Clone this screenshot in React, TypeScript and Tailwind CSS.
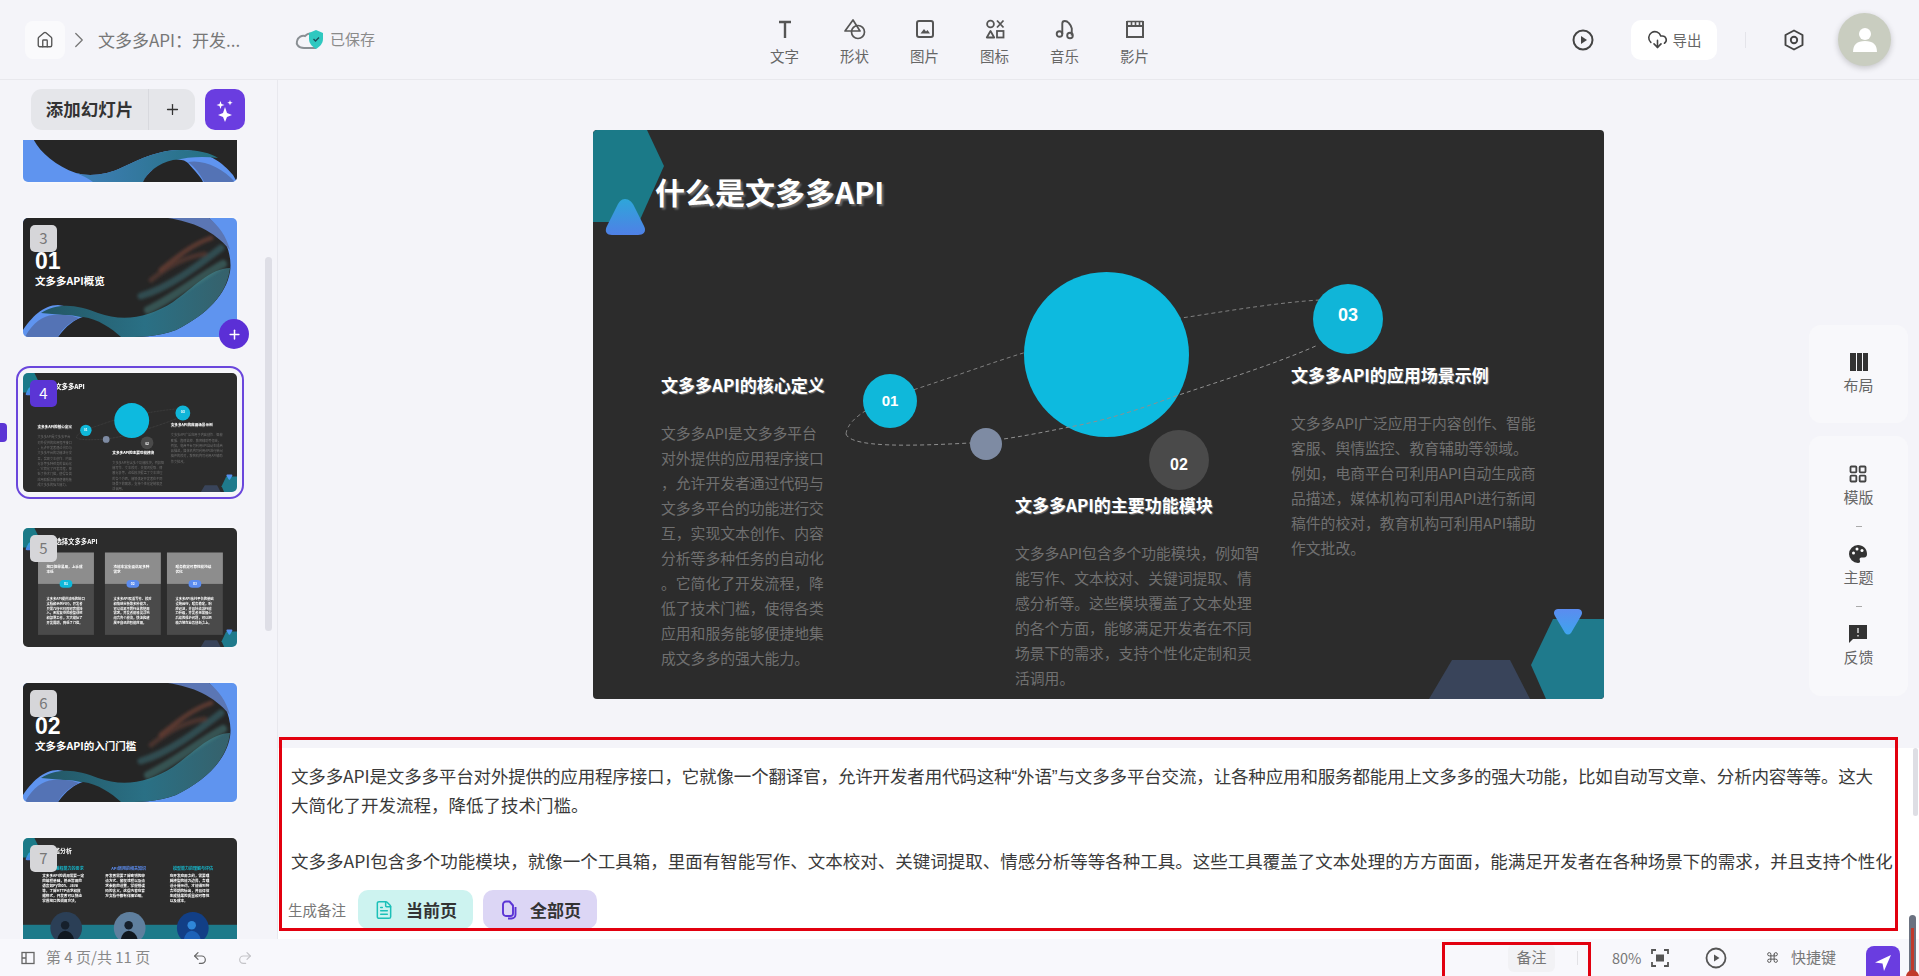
import { Home, ChevronRight, Plus, Undo2, Redo2, Command, CloudDownload, FileText, LayoutGrid } from "lucide-react";

const paraOne = [
  "文多多API是文多多平台",
  "对外提供的应用程序接口",
  "，允许开发者通过代码与",
  "文多多平台的功能进行交",
  "互，实现文本创作、内容",
  "分析等多种任务的自动化",
  "。它简化了开发流程，降",
  "低了技术门槛，使得各类",
  "应用和服务能够便捷地集",
  "成文多多的强大能力。",
];
const paraTwo = [
  "文多多API包含多个功能模块，例如智",
  "能写作、文本校对、关键词提取、情",
  "感分析等。这些模块覆盖了文本处理",
  "的各个方面，能够满足开发者在不同",
  "场景下的需求，支持个性化定制和灵",
  "活调用。",
];
const paraThree = [
  "文多多API广泛应用于内容创作、智能",
  "客服、舆情监控、教育辅助等领域。",
  "例如，电商平台可利用API自动生成商",
  "品描述，媒体机构可利用API进行新闻",
  "稿件的校对，教育机构可利用API辅助",
  "作文批改。",
];

const tools = [
  { label: "文字", icon: <TextIcon /> },
  { label: "形状", icon: <ShapeIcon /> },
  { label: "图片", icon: <PictureIcon /> },
  { label: "图标", icon: <IconsIcon /> },
  { label: "音乐", icon: <MusicIcon /> },
  { label: "影片", icon: <ClapIcon /> },
];

function TextIcon() {
  return (
    <svg viewBox="0 0 22 22" className="w-[22px] h-[22px]" fill="none" stroke="#555" strokeWidth="2.4">
      <path d="M5 4h12M11 4v16" />
    </svg>
  );
}
function ShapeIcon() {
  return (
    <svg viewBox="0 0 24 22" className="w-[24px] h-[22px]" fill="none" stroke="#555" strokeWidth="1.7" strokeLinejoin="round">
      <path d="M10 2 2 13h15z" />
      <circle cx="15" cy="14" r="6.5" />
    </svg>
  );
}
function PictureIcon() {
  return (
    <svg viewBox="0 0 22 22" className="w-[22px] h-[22px]" fill="none" stroke="#555" strokeWidth="2">
      <rect x="3" y="3" width="16" height="16" rx="2" />
      <path d="M6.5 15.5 10 11l2 2.5 1.5-1.5 2.5 3.5z" fill="#555" stroke="none" />
    </svg>
  );
}
function IconsIcon() {
  return (
    <svg viewBox="0 0 22 22" className="w-[22px] h-[22px]" fill="none" stroke="#555" strokeWidth="1.8">
      <circle cx="6.5" cy="6" r="3.4" />
      <path d="m13 2.5 6.5 7M19.500 2.500l-6.500 7" />
      <path d="M6.500 13 2.800 19.500h7.400z" strokeLinejoin="round" />
      <rect x="13" y="13" width="6.500" height="6.500" />
    </svg>
  );
}
function MusicIcon() {
  return (
    <svg viewBox="0 0 22 22" className="w-[22px] h-[22px]" fill="none" stroke="#555" strokeWidth="1.9">
      <circle cx="5.500" cy="16" r="2.800" />
      <circle cx="16" cy="17.500" r="2.800" />
      <path d="M8.300 16V5.500q0-2.500 2.500-2.500 2.300 0 4 2 2 2 3 5.500l-.1 7" />
    </svg>
  );
}
function ClapIcon() {
  return (
    <svg viewBox="0 0 22 22" className="w-[22px] h-[22px]" fill="none" stroke="#555" strokeWidth="2">
      <path d="M3 8h16v11H3zM3 3v5M19 3v5" />
      <path d="M3 3.500h16M7.500 3v4.500M11.500 3v4.500M15.500 3v4.500" strokeWidth="1.600" />
    </svg>
  );
}

function HexDecor() {
  return (
    <svg viewBox="0 0 1011 569" className="absolute inset-0 w-[1011px] h-[569px]">
      <defs>
        <linearGradient id="triUp" x1="0" y1="0" x2="0" y2="1">
          <stop offset="0" stopColor="#2ea6da" />
          <stop offset="1" stopColor="#4f80e6" />
        </linearGradient>
        <linearGradient id="triDown" x1="0" y1="0" x2="0" y2="1">
          <stop offset="0" stopColor="#5b8cf0" />
          <stop offset="1" stopColor="#3ea4ee" />
        </linearGradient>
      </defs>
      <path d="M0 4Q0 0 4 0H54L71 36 46 92H0Z" fill="#1b7a88" />
      <path d="M32 69C36 69 39 72 41 76L51 96C54 102 50 105 45 105H19C14 105 11 102 14 96L24 76C26 72 28 69 32 69Z" fill="url(#triUp)" />
      <path d="M836 569 859 530H917L937 569Z" fill="#39445a" />
      <path d="M1011 489H960L938 535 953 569H1011Z" fill="#1f7a8c" />
      <path d="M965 479H985C989 479 990 483 988 486L978 503C976 505 974 505 972 503L962 486C960 483 961 479 965 479Z" fill="url(#triDown)" />
    </svg>
  );
}

function MainSlide() {
  const heading = "absolute text-[17px] leading-[24px] font-bold text-white whitespace-nowrap [text-shadow:1px_1px_1px_rgba(255,255,255,0.35)]";
  const para = "absolute text-[14.8px] leading-[25px] text-[#707070] whitespace-nowrap";
  return (
    <div className="relative w-[1011px] h-[569px] bg-[#2c2c2c] rounded-[4px] overflow-hidden">
      <HexDecor />
      <svg viewBox="0 0 1011 569" className="absolute inset-0 w-[1011px] h-[569px]" fill="none" stroke="#808080" strokeWidth="1" strokeDasharray="4 3">
        <path d="M253 304C255 285 290 270 323 259 360 247 395 234 427 224 480 208 540 195 595 187 640 180 690 172 727 170" />
      </svg>
      <div className="absolute left-[431px] top-[142px] w-[165px] h-[165px] rounded-full bg-[#0dbadf]" />
      <svg viewBox="0 0 1011 569" className="absolute inset-0 w-[1011px] h-[569px]" fill="none" stroke="#8f8f8f" strokeWidth="1" strokeDasharray="4 3">
        <path d="M253 304C258 318 320 316 377 313 420 309 450 302 487 295 520 288 550 278 577 268 630 250 680 235 725 215" />
      </svg>
      <div className="absolute left-[377px] top-[298px] w-[32px] h-[32px] rounded-full bg-[#7e8ba3]" />
      <div className="absolute left-[270px] top-[244px] w-[54px] h-[54px] rounded-full bg-[#0fb8da] flex items-center justify-center text-white font-bold text-[15px] font-['Liberation_Sans',sans-serif]">01</div>
      <div className="absolute left-[556px] top-[300px] w-[60px] h-[60px] rounded-full bg-[#4a4a4a] flex items-center justify-center pt-[10px] text-white font-bold text-[16px] font-['Liberation_Sans',sans-serif]">02</div>
      <div className="absolute left-[720px] top-[154px] w-[70px] h-[70px] rounded-full bg-[#10b5d8] flex items-center justify-center pb-[8px] text-white font-bold text-[18px] font-['Liberation_Sans',sans-serif]">03</div>

      <div className="absolute left-[62px] top-[41px] text-[30px] leading-[40px] font-bold text-white whitespace-nowrap [text-shadow:2px_2px_2px_rgba(255,255,255,0.3)]">什么是文多多API</div>

      <div className={`${heading} left-[68px] top-[243px]`}>文多多API的核心定义</div>
      <div className={`${para} left-[68px] top-[290px]`}>
        {paraOne.map((line) => <div key={line}>{line}</div>)}
      </div>
      <div className={`${heading} left-[422px] top-[363px]`}>文多多API的主要功能模块</div>
      <div className={`${para} left-[422px] top-[410px]`}>
        {paraTwo.map((line) => <div key={line}>{line}</div>)}
      </div>
      <div className={`${heading} left-[698px] top-[233px]`}>文多多API的应用场景示例</div>
      <div className={`${para} left-[698px] top-[280px]`}>
        {paraThree.map((line) => <div key={line}>{line}</div>)}
      </div>
    </div>
  );
}

// wave cover used by the section slides
function WaveArt() {
  return (
    <svg viewBox="0 0 214 119" className="absolute inset-0 w-[214px] h-[119px]">
      <defs>
        <linearGradient id="waveTeal" x1="0" y1="0" x2="1" y2="0">
          <stop offset="0" stopColor="#235664" />
          <stop offset="0.55" stopColor="#2a7085" />
          <stop offset="1" stopColor="#36616b" />
        </linearGradient>
        <filter id="waveBlur" x="-20%" y="-20%" width="140%" height="140%">
          <feGaussianBlur stdDeviation="1.6" />
        </filter>
      </defs>
      <rect width="214" height="119" fill="#5f94ef" />
      <path d="M0 0H186C200 14 210 36 207 54 203 76 185 96 153 112 135 119 115 119 97 119 80 106 60 90 35 87 20 87 8 100 0 112Z" fill="#252525" />
      <path d="M145 0H186C196 8 203 18 207 32 190 12 170 4 145 0Z" fill="#5b76b4" />
      <path d="M18 95C35 84 55 87 75 95 100 104 125 100 150 84 170 70 188 50 207 50 204 76 185 96 153 112 135 119 115 119 97 119 85 108 60 96 40 97Z" fill="url(#waveTeal)" />
      <g filter="url(#waveBlur)" fill="none" strokeLinecap="round">
        <path d="M125 92C150 80 172 62 200 46" stroke="#4c8c8a" strokeWidth="8" opacity="0.45" />
        <path d="M118 78C145 70 172 50 198 30" stroke="#35666c" strokeWidth="7" opacity="0.6" />
        <path d="M138 52C155 38 170 26 188 20" stroke="#7c4635" strokeWidth="5" opacity="0.6" />
        <path d="M128 62C148 46 165 38 182 36" stroke="#5f3a32" strokeWidth="5" opacity="0.6" />
      </g>
      <path d="M35 119C43 108 52 101 60 99 75 101 88 110 98 119Z" fill="#252525" />
      <path d="M2 119C10 104 20 98 30 97 40 96 50 97 56 100 46 105 38 112 35 119Z" fill="#5473b5" />
    </svg>
  );
}

// slide 2 only shows its lower edge in the list
function SecondThumbArt() {
  return (
    <svg viewBox="0 0 214 119" className="absolute inset-0 w-[214px] h-[119px]">
      <defs>
        <linearGradient id="waveTealTwo" x1="0" y1="0" x2="1" y2="0">
          <stop offset="0" stopColor="#3f7fb8" />
          <stop offset="1" stopColor="#246f7e" />
        </linearGradient>
      </defs>
      <rect width="214" height="119" fill="#5f94ef" />
      <path d="M8 70C12 85 30 102 53 110 65 114 85 112 100 104 120 94 140 86 160 87 185 88 200 100 210 112L214 119V0H8Z" fill="#262626" />
      <path d="M53 110C65 114 85 112 100 104 120 94 140 86 160 87 175 87 188 90 195 95 170 92 145 96 128 108 124 112 122 115 120 119H70C65 115 58 112 53 110Z" fill="url(#waveTealTwo)" />
      <path d="M120 119C124 110 135 100 150 97 158 96 162 97 165 100 172 108 178 114 180 119Z" fill="#252525" />
      <path d="M165 99C180 96 200 105 212 119H181C178 112 172 104 165 99Z" fill="#5473b5" />
    </svg>
  );
}

function SectionThumb({ num, title }: { num: string; title: string }) {
  return (
    <>
      <WaveArt />
      <div className="absolute left-[12px] top-[29px] text-[23px] leading-[28px] font-bold text-white font-['Liberation_Sans',sans-serif]">{num}</div>
      <div className="absolute left-[12px] top-[56px] text-[10.500px] leading-[14px] font-bold text-white whitespace-nowrap">{title}</div>
    </>
  );
}

const whyCards = [
  { color: "bg-[#0fb8da]", num: "01", title: "接口简单易用，上手成本低", lines: ["文多多API提供清晰的接口", "文档和示例代码，开发者", "只需几行代码即可完成接", "入，无需复杂的模型训练", "和部署工作，大大缩短了", "开发周期，降低了门槛。"] },
  { color: "bg-[#5b8cf0]", num: "02", title: "功能丰富全面满足多种需求", lines: ["文多多API覆盖写作、校对", "和情感分析等多种能力，", "可以满足不同行业的使用", "需求，开发者能够灵活地", "组合各个模块，快速构建", "属于自己的智能应用。"] },
  { color: "bg-[#5b8cf0]", num: "03", title: "服务稳定可靠性能持续优化", lines: ["文多多API依托平台的基础", "设施运行，服务稳定，响", "应迅速，并且持续进行能", "力升级，开发者无需担心", "后续的维护问题，可以把", "精力放在业务创新之上。"] },
];

function WhySlide() {
  const lefts = ["left-[71px]", "left-[387px]", "left-[680px]"];
  return (
    <div className="relative w-[1011px] h-[569px] bg-[#2c2c2c] rounded-[4px] overflow-hidden">
      <HexDecor />
      <div className="absolute left-[63px] top-[41px] text-[30px] leading-[40px] font-bold text-white whitespace-nowrap">为什么选择文多多API</div>
      {whyCards.map((card, i) => (
        <div key={card.num} className={`absolute ${lefts[i]} top-[116px] w-[264px] h-[389px] bg-[#4a4a4a]`}>
          <div className="h-[148px] bg-[#8d8d8d] px-[40px] pt-[55px] text-[17px] leading-[24px] font-bold text-white">{card.title}</div>
          <div className={`absolute left-[102px] top-[130px] w-[60px] h-[36px] rounded-full ${card.color} flex items-center justify-center text-white text-[16px] font-bold`}>{card.num}</div>
          <div className="px-[40px] pt-[60px] text-[15.500px] leading-[22px] font-bold text-white whitespace-nowrap">
            {card.lines.map((line) => <div key={line}>{line}</div>)}
          </div>
        </div>
      ))}
    </div>
  );
}

const gateCols = [
  { head: "基础编程能力的要求", color: "text-[#16b4c8]", left: "left-[91px]", lines: ["文多多API的调用需要一定", "的编程基础，熟悉常用的", "语言如Python、Java", "等，了解HTTP请求和数", "据格式，开发者可以快速", "掌握接口的调用方法。"] },
  { head: "API调用的相关知识", color: "text-[#5b8cf0]", left: "left-[389px]", lines: ["开发者需要了解密钥的申", "请方式、鉴权流程以及请", "求参数的设置，掌握错误", "码的含义，这些内容在官", "方文档中都有详细说明。"] },
  { head: "模型能力的理解与评估", color: "text-[#16b4c8]", left: "left-[693px]", lines: ["在开发应用之前，需要理", "解模型的能力边界，合理", "设计提示词，才能得到符", "合预期的输出，并且评估", "生成结果的质量和可靠性", "以及成本。"] },
];

function GateSlide() {
  const circleLefts = ["left-[129px]", "left-[429px]", "left-[727px]"];
  const circleColors = ["bg-[#2b3f56]", "bg-[#5f7f9e]", "bg-[#123f86]"];
  return (
    <div className="relative w-[1011px] h-[569px] bg-[#2c2c2c] rounded-[4px] overflow-hidden">
      <div className="absolute left-0 right-0 top-[410px] bottom-0 bg-[#1d7a8a]" />
      <HexDecor />
      <div className="absolute left-[63px] top-[41px] text-[28px] leading-[40px] font-bold text-white whitespace-nowrap">入门门槛分析</div>
      {gateCols.map((col) => (
        <div key={col.left} className={`absolute ${col.left} top-[128px] w-[220px]`}>
          <div className={`text-[19px] leading-[28px] font-bold text-center whitespace-nowrap ${col.color}`}>{col.head}</div>
          <div className="mt-[10px] text-[17px] leading-[23px] font-bold text-white whitespace-nowrap">
            {col.lines.map((line) => <div key={line}>{line}</div>)}
          </div>
        </div>
      ))}
      {circleLefts.map((left, i) => (
        <div key={left} className={`absolute ${left} top-[350px] w-[150px] h-[150px] rounded-full overflow-hidden ${circleColors[i]}`}>
          <svg viewBox="0 0 150 150" className="w-[150px] h-[150px]">
            <circle cx="70" cy="62" r="20" fill={i === 2 ? "#2f86d8" : "#16202c"} />
            <path d="M30 150Q35 90 70 88 110 90 116 150Z" fill={i === 2 ? "#1c62b8" : "#101820"} />
          </svg>
        </div>
      ))}
    </div>
  );
}

function Scaled({ children }: { children: React.ReactNode }) {
  return <div className="absolute left-0 top-0 w-[1011px] h-[569px] origin-top-left scale-[0.2117]">{children}</div>;
}

function Thumb({ num, active, extra, children }: { num?: number; active?: boolean; extra?: string; children: React.ReactNode }) {
  return (
    <div className={`relative w-[214px] h-[119px] shrink-0 ${extra ?? ""}`}>
      {active && <div className="absolute -inset-[7px] border-2 border-[#6a46dc] rounded-[14px]" />}
      <div className="absolute inset-0 rounded-[5px] overflow-hidden shadow-[0_0_4px_rgba(255,255,255,0.9)]">{children}</div>
      {num !== undefined && (
        <div className={`absolute left-[7px] top-[7px] w-[27px] h-[27px] rounded-[5px] flex items-center justify-center text-[15px] ${active ? "bg-[#5b35d5] text-white" : "bg-[#d6d6d9] text-[#777]"}`}>{num}</div>
      )}
    </div>
  );
}

function RailItem({ label, children }: { label: string; children: React.ReactNode }) {
  return (
    <div className="flex flex-col items-center">
      <div className="h-[22px] flex items-center justify-center">{children}</div>
      <div className="mt-[1px] text-[15px] leading-[22px] text-[#666]">{label}</div>
    </div>
  );
}

export default function App() {
  return (
    <div className="relative w-[1919px] h-[976px] overflow-hidden flex flex-col bg-[#f4f4f9] font-['Noto_Sans_CJK_SC','Noto_Sans',sans-serif]">
      {/* top bar */}
      <header className="h-[80px] shrink-0 border-b border-[#e8e8ed] grid grid-cols-[1fr_420px_1fr]">
        <div className="flex items-center pl-[25px]">
          <div className="w-[40px] h-[38px] rounded-[8px] bg-[#fafafc] flex items-center justify-center">
            <Home size={18} color="#555" strokeWidth={1.8} />
          </div>
          <ChevronRight size={26} color="#777" strokeWidth={1.2} className="ml-[1px]" />
          <div className="ml-[6px] w-[143px] text-[17px] text-[#777] whitespace-nowrap">文多多API：开发...</div>
          <svg viewBox="0 0 30 22" className="ml-[54px] w-[30px] h-[22px]" fill="none">
            <path d="M9 19H21M9 19C3 19 1 15 2 12 3 8 7 6 10 7 12 5 15 4 17 5" stroke="#8a8f94" strokeWidth="2" />
            <path d="M21 1 28 4V10C28 15 24 18 21 20 18 18 14 15 14 10V4Z" fill="#2fc8c0" />
            <path d="m18.500 10 2 2 3.500-3.500" stroke="#1d4e5a" strokeWidth="1.400" />
          </svg>
          <div className="ml-[5px] text-[15px] text-[#8a8a8a]">已保存</div>
        </div>
        <div className="flex pt-[18px]">
          {tools.map((tool) => (
            <div key={tool.label} className="w-[70px] flex flex-col items-center">
              <div className="h-[22px] flex items-center">{tool.icon}</div>
              <div className="mt-[6px] text-[14.500px] leading-[20px] text-[#666]">{tool.label}</div>
            </div>
          ))}
        </div>
        <div className="flex items-center justify-end pr-[28px]">
          <svg viewBox="0 0 24 24" className="w-[24px] h-[24px]" fill="none">
            <circle cx="12" cy="12" r="9.500" stroke="#444" strokeWidth="2" />
            <path d="M10 8v8l6-4z" fill="#444" />
          </svg>
          <div className="ml-[36px] w-[86px] h-[40px] rounded-[10px] bg-white flex items-center justify-center gap-[5px]">
            <CloudDownload size={21} color="#444" strokeWidth={1.8} />
            <span className="text-[14.500px] text-[#666]">导出</span>
          </div>
          <div className="ml-[28px] w-px h-[16px] bg-[#e4e4ea]" />
          <svg viewBox="0 0 24 24" className="ml-[36px] w-[24px] h-[24px]" fill="none" stroke="#444" strokeWidth="1.900">
            <path d="M12 2.500 20.500 7v10L12 21.500 3.500 17V7z" strokeLinejoin="round" />
            <circle cx="12" cy="12" r="3.200" />
          </svg>
          <div className="ml-[32px] w-[53px] h-[53px] rounded-full bg-[#c9cdc0] shadow-[0_2px_6px_rgba(0,0,0,0.2)] flex items-center justify-center">
            <svg viewBox="0 0 30 30" className="w-[30px] h-[30px]" fill="#fff">
              <circle cx="15" cy="9" r="6" />
              <path d="M3 27Q3 16 15 16 27 16 27 27Z" />
            </svg>
          </div>
        </div>
      </header>

      <div className="flex-1 flex min-h-0">
        {/* slide list */}
        <aside className="relative w-[278px] shrink-0 border-r border-[#e8e8ee] pt-[9px]">
          <div className="flex pl-[31px] gap-[10px]">
            <div className="flex w-[164px] h-[41px] rounded-[11px] bg-[#e5e6ea]">
              <div className="w-[118px] flex items-center justify-center border-r border-[#d8d9de] text-[17.500px] font-bold text-[#333]">添加幻灯片</div>
              <div className="flex-1 flex items-center justify-center">
                <Plus size={17} color="#333" strokeWidth={1.8} />
              </div>
            </div>
            <div className="w-[40px] h-[41px] rounded-[10px] bg-[#6a3de0] flex items-center justify-center">
              <svg viewBox="0 0 24 24" className="w-[24px] h-[24px]" fill="#fff">
                <path d="M12 9l2 6 5 2-5 2-2 5-2-5-5-2 5-2zM7.500 3l1 3 3 1-3 1-1 3-1-3-3-1 3-1zM17 2l.7 2 2 .7-2 .7-.7 2-.7-2-2-.7 2-.7z" />
              </svg>
            </div>
          </div>
          <div className="mt-[10px] h-[799px] overflow-hidden pl-[23px] flex flex-col gap-[36px]">
            <Thumb extra="-mt-[77px]"><SecondThumbArt /></Thumb>
            <Thumb num={3}><SectionThumb num="01" title="文多多API概览" /></Thumb>
            <Thumb num={4} active><Scaled><MainSlide /></Scaled></Thumb>
            <Thumb num={5}><Scaled><WhySlide /></Scaled></Thumb>
            <Thumb num={6}><SectionThumb num="02" title="文多多API的入门门槛" /></Thumb>
            <Thumb num={7} extra="mb-[-20px]"><Scaled><GateSlide /></Scaled></Thumb>
          </div>
          {/* floats over the list */}
          <div className="absolute left-[219px] top-[239px] w-[30px] h-[30px] rounded-full bg-[#5b2fd6] flex items-center justify-center">
            <Plus size={15} color="#fff" strokeWidth={2.4} />
          </div>
          <div className="absolute left-0 top-[343px] w-[7px] h-[19px] rounded-r-[4px] bg-[#5b35d5]" />
          <div className="absolute left-[265px] top-[177px] w-[7px] h-[374px] rounded-full bg-[#dedee6]" />
        </aside>

        <main className="flex-1 min-w-0 flex flex-col">
          <div className="h-[657px] shrink-0 flex justify-between pl-[315px] pr-[11px] pt-[50px]">
            <MainSlide />
            <div className="pt-[195px] flex flex-col gap-[13px]">
              <div className="w-[99px] h-[98px] rounded-[12px] bg-[#f8f8fb] pt-[26px]">
                <RailItem label="布局">
                  <svg viewBox="0 0 20 20" className="w-[20px] h-[20px]" fill="#333">
                    <path d="M1 1h6v18H1zM8 1h5v18H8zM14 1h5v18h-5z" />
                  </svg>
                </RailItem>
              </div>
              <div className="w-[99px] h-[260px] rounded-[12px] bg-[#f8f8fb] pt-[27px] flex flex-col items-center">
                <RailItem label="模版"><LayoutGrid size={20} color="#444" strokeWidth={2.2} /></RailItem>
                <div className="mt-[18px] mb-[16px] w-[6px] h-px bg-[#aaa]" />
                <RailItem label="主题">
                  <svg viewBox="0 0 20 20" className="w-[20px] h-[20px]">
                    <path d="M10 1a9 9 0 0 0 0 18c2 0 2.500-1.500 1.800-2.800-.7-1.500.3-2.700 1.700-2.700H16c2 0 3-1.500 3-3.500C19 4.500 15 1 10 1z" fill="#333" />
                    <circle cx="5.500" cy="9" r="1.500" fill="#fff" />
                    <circle cx="9" cy="5" r="1.500" fill="#fff" />
                    <circle cx="14" cy="6.500" r="1.500" fill="#fff" />
                  </svg>
                </RailItem>
                <div className="mt-[18px] mb-[16px] w-[6px] h-px bg-[#aaa]" />
                <RailItem label="反馈">
                  <svg viewBox="0 0 20 20" className="w-[20px] h-[20px]">
                    <path d="M1 1h18v14H5l-4 4z" fill="#333" />
                    <path d="M10 4v5M10 11v1.500" stroke="#ccc" strokeWidth="1.600" />
                  </svg>
                </RailItem>
              </div>
            </div>
          </div>

          {/* notes */}
          <div className="h-[202px] shrink-0 pt-[11px]">
            <div className="relative h-[191px] bg-white pl-[13px] pt-[14px]">
              <div className="text-[17.500px] leading-[28px] text-[#3a3a3a] whitespace-nowrap">
                <div className="tracking-[-0.15px]">
                  文多多API是文多多平台对外提供的应用程序接口，它就像一个翻译官，允许开发者用代码这种<span className="font-['Liberation_Sans',sans-serif]">“</span>外语<span className="font-['Liberation_Sans',sans-serif]">”</span>与文多多平台交流，让各种应用和服务都能用上文多多的强大功能，比如自动写文章、分析内容等等。这大
                </div>
                <div>大简化了开发流程，降低了技术门槛。</div>
                <div>&nbsp;</div>
                <div>文多多API包含多个功能模块，就像一个工具箱，里面有智能写作、文本校对、关键词提取、情感分析等等各种工具。这些工具覆盖了文本处理的方方面面，能满足开发者在各种场景下的需求，并且支持个性化</div>
              </div>
              <div className="mt-[15px] -ml-[3px] flex items-center">
                <div className="w-[70px] text-[14.500px] text-[#777]">生成备注</div>
                <div className="w-[115px] h-[39px] rounded-[10px] bg-[#cdf3f0] flex items-center pl-[16px] gap-[12px]">
                  <FileText size={20} color="#1cc0b8" strokeWidth={1.800} />
                  <span className="text-[17px] font-bold text-[#333]">当前页</span>
                </div>
                <div className="ml-[10px] w-[114px] h-[39px] rounded-[10px] bg-[#dcd6f5] flex items-center pl-[16px] gap-[11px]">
                  <svg viewBox="0 0 20 20" className="w-[20px] h-[20px]" fill="none" stroke="#5b35d5" strokeWidth="1.900" strokeLinejoin="round">
                    <path d="M7 1.500h3.500L14 5.500v8a2.500 2.500 0 0 1-2.500 2.500H7a3 3 0 0 1-3-3V4.500a3 3 0 0 1 3-3z" />
                    <path d="M16.500 7v7.500a4 4 0 0 1-4 4H9" />
                  </svg>
                  <span className="text-[17px] font-bold text-[#333]">全部页</span>
                </div>
              </div>
              <div className="absolute right-[1px] top-0 w-[5px] h-[68px] rounded-full bg-[#dedee4]" />
            </div>
          </div>
        </main>
      </div>

      {/* status bar */}
      <footer className="h-[37px] shrink-0 bg-[#f8f8fc] flex items-center pl-[21px] pr-[19px]">
        <svg viewBox="0 0 14 14" className="w-[14px] h-[14px]" fill="none" stroke="#666" strokeWidth="1.300">
          <rect x="1" y="1.500" width="12" height="11" />
          <path d="M5 1.500v11M1 7h4" />
        </svg>
        <div className="ml-[11px] w-[140px] text-[15px] text-[#888] whitespace-nowrap">第 4 页/共 11 页</div>
        <Undo2 size={16} color="#666" strokeWidth={1.800} className="ml-[6px]" />
        <Redo2 size={16} color="#c4c4c8" strokeWidth={1.800} className="ml-[29px]" />
        <div className="ml-auto flex items-center">
          <div className="w-[47px] h-[28px] rounded-[6px] bg-[#f2f2f5] flex items-center justify-center text-[15px] text-[#777]">备注</div>
          <div className="ml-[22px] w-px h-[14px] bg-[#e2e2e6]" />
          <div className="ml-[34px] w-[32px] text-[14.500px] text-[#777]">80%</div>
          <svg viewBox="0 0 20 20" className="ml-[6px] w-[20px] h-[20px]" fill="none" stroke="#555" strokeWidth="1.800">
            <path d="M2 6V2h4M14 2h4v4M18 14v4h-4M6 18H2v-4" />
            <rect x="6" y="6.500" width="8" height="7" fill="#555" stroke="none" />
          </svg>
          <svg viewBox="0 0 22 22" className="ml-[35px] w-[22px] h-[22px]" fill="none">
            <circle cx="11" cy="11" r="9.500" stroke="#555" strokeWidth="1.800" />
            <path d="M9 7.500v7l5.500-3.500z" fill="#555" />
          </svg>
          <Command size={13} color="#555" strokeWidth={1.800} className="ml-[39px]" />
          <div className="ml-[12px] text-[15px] text-[#777]">快捷键</div>
          <div className="ml-[30px] mt-[16px] w-[34px] h-[40px] rounded-[8px] bg-[#6a3de0] flex items-start justify-center pt-[7px]">
            <svg viewBox="0 0 20 20" className="w-[20px] h-[20px]" fill="#fff">
              <path d="M18 2 2 9.500l7.500 1L11 18z" />
            </svg>
          </div>
        </div>
      </footer>

      {/* red annotation boxes */}
      <div className="absolute left-[279px] top-[737px] w-[1619px] h-[194px] border-[3px] border-[#e2000f]" />
      <div className="absolute left-[1442px] top-[942px] w-[149px] h-[50px] border-[3px] border-[#e2000f]" />
      {/* thermometer-like marker at the window edge */}
      <div className="absolute left-[1909px] top-[915px] w-[7px] h-[70px] rounded-full bg-[#6b7280] flex justify-center pt-[13px]">
        <div className="w-[3px] h-[50px] bg-[#c0392b]" />
      </div>
      <div className="absolute left-[1906px] top-[970px] w-[13px] h-[13px] rounded-full bg-[#c0392b]" />
    </div>
  );
}
